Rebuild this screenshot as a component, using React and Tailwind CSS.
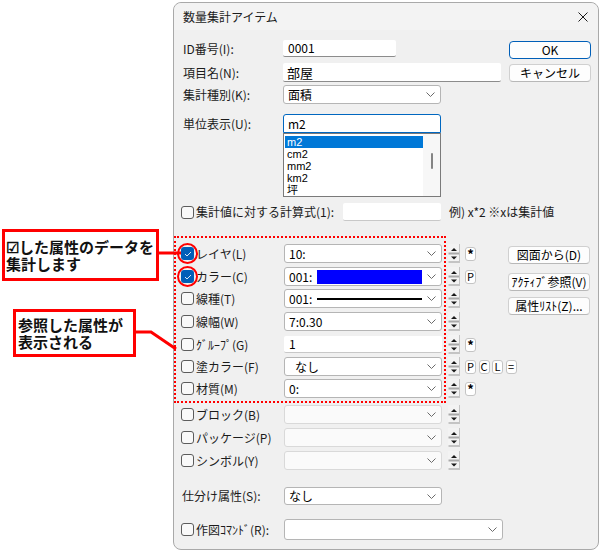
import React from "react";

// 数量集計アイテム ダイアログ + 注釈
const LABEL = "whitespace-nowrap text-[12px] leading-none text-[#1b1b1b]";

function Chevron() {
  return (
    <svg width="9" height="5" viewBox="0 0 9 5" className="shrink-0">
      <path d="M0.5 0.5L4.5 4.5L8.5 0.5" fill="none" stroke="#6b6b6b" strokeWidth="1" />
    </svg>
  );
}

function Combo({ children, size = "h-[19px] w-[158px]", disabled, pad = "pl-[4px]" }) {
  return (
    <div
      className={`flex shrink-0 items-center rounded-[3px] border pr-[5px] ${pad} ${size} ${
        disabled ? "border-[#d9d9d9] bg-[#fafafa]" : "border-[#b5b5b5] bg-white"
      }`}
    >
      <div className="flex min-w-0 flex-1 items-center">{children}</div>
      <Chevron />
    </div>
  );
}

function Spin() {
  return (
    <svg width="12" height="19" viewBox="0 0 12 19" className="ml-[6px] shrink-0">
      <rect x="0" y="0" width="12" height="19" fill="#f3f3f3" />
      <path d="M3 7L6 4L9 7Z" fill="#1a1a1a" />
      <rect x="0.5" y="8.5" width="11" height="2" fill="#a9a9a9" />
      <path d="M3 12.5L6 15.5L9 12.5Z" fill="#1a1a1a" />
      <rect x="0.5" y="17" width="11" height="2" fill="#c4c4c4" />
      <rect x="11" y="0" width="1" height="19" fill="#c4c4c4" />
    </svg>
  );
}

function Tiny({ children, bold }) {
  return (
    <span
      className={`flex h-[14px] w-[11px] items-center justify-center rounded-[3px] border border-[#c4c4c4] bg-white leading-none text-black ${
        bold ? "text-[13px] font-bold" : "text-[11px]"
      }`}
    >
      {children}
    </span>
  );
}

function Btn({ children, primary, className = "" }) {
  return (
    <div
      className={`flex h-[18px] w-[82px] shrink-0 items-center justify-center rounded-[4px] bg-[#fdfdfd] text-[12px] leading-none text-black ${
        primary ? "border-[1.5px] border-[#005fb8]" : "border border-[#d0d0d0] border-b-[#b8b8b8]"
      } ${className}`}
    >
      {children}
    </div>
  );
}

function Check({ checked }) {
  if (checked) {
    return (
      <span className="relative flex h-[13px] w-[13px] shrink-0 items-center justify-center rounded-[3px] bg-[#005fb8]">
        <svg width="8" height="6" viewBox="0 0 8 6">
          <path d="M1 3L3 5L7 1" fill="none" stroke="#d6e6f7" strokeWidth="1" />
        </svg>
        <span className="absolute -inset-[4px] rounded-full border-2 border-[#ff0000]" />
      </span>
    );
  }
  return <span className="h-[13px] w-[13px] shrink-0 rounded-[3px] border border-[#5c5c5c] bg-[#f9f9f9]" />;
}

function AttrRow({ checked, label, children, extra, right, className = "" }) {
  return (
    <div className={`flex h-[19px] items-center pl-[7px] pr-[8px] ${className}`}>
      <div className="flex w-[103px] shrink-0 items-center gap-[2px]">
        <Check checked={checked} />
        <span className={LABEL}>{label}</span>
      </div>
      {children}
      <Spin />
      {extra && <div className="ml-[5px] flex gap-[2.5px]">{extra}</div>}
      {right}
    </div>
  );
}

const UNITS = ["m2", "cm2", "mm2", "km2", "坪"];

export default function App() {
  return (
    <div className="relative flex h-[551px] w-[600px] overflow-hidden bg-white [font-family:'Noto_Sans_CJK_JP','Noto_Sans',sans-serif]">
      {/* 注釈 */}
      <div className="flex w-[173px] shrink-0 flex-col">
        <div className="ml-[2px] mt-[229px] h-[52px] w-[157px] border-[3px] border-[#ff0000] bg-white pl-[1px] pt-[6px] text-[15px] font-bold leading-[17px] text-[#111]">
          <p>☑した属性のデータを</p>
          <p>集計します</p>
        </div>
        <div className="ml-[13px] mt-[28px] h-[48px] w-[123px] border-[3px] border-[#ff0000] bg-white pl-[2px] pt-[4px] text-[15px] font-bold leading-[17px] text-[#111]">
          <p>参照した属性が</p>
          <p>表示される</p>
        </div>
      </div>

      {/* ダイアログ */}
      <div className="mt-[2px] flex h-[548px] w-[426px] shrink-0 flex-col rounded-[8px] border border-[#a9a9a9] bg-[#f0f0f0]">
        <div className="flex h-[27px] shrink-0 items-center justify-between rounded-t-[8px] bg-[#f3f3f3] pl-[9px] pr-[10px]">
          <span className="text-[12px] leading-none text-[#1b1b1b]">数量集計アイテム</span>
          <svg width="10" height="10" viewBox="0 0 10 10">
            <path d="M0.5 0.5L9.5 9.5M9.5 0.5L0.5 9.5" stroke="#1a1a1a" strokeWidth="1" />
          </svg>
        </div>

        <div className="flex flex-col">
          <div className="mt-[10px] flex h-[17px] items-center pl-[9px] pr-[7px]">
            <span className={`w-[100px] ${LABEL}`}>ID番号(I):</span>
            <div className="flex h-[17px] w-[113px] items-center rounded-[2px] border-b border-[#8c8c8c] bg-white pl-[5px] text-[12px] leading-none">
              0001
            </div>
            <Btn primary className="ml-auto mt-[2px]">OK</Btn>
          </div>

          <div className="mt-[6px] flex h-[19px] items-center pl-[9px] pr-[7px]">
            <span className={`w-[100px] ${LABEL}`}>項目名(N):</span>
            <div className="flex h-[19px] w-[218px] items-center rounded-[2px] border-b border-[#8c8c8c] bg-white pl-[4px] text-[13px] leading-none">
              部屋
            </div>
            <Btn className="ml-auto">キャンセル</Btn>
          </div>

          <div className="mt-[3px] flex h-[19px] items-center pl-[9px]">
            <span className={`w-[100px] ${LABEL}`}>集計種別(K):</span>
            <Combo>
              <span className="text-[12px] leading-none">面積</span>
            </Combo>
          </div>

          <div className="mt-[10px] flex h-[19px] items-center pl-[9px]">
            <span className={`w-[100px] ${LABEL}`}>単位表示(U):</span>
            <div className="flex h-[19px] w-[158px] items-center rounded-t-[3px] border border-[#0067c0] bg-white pl-[4px] text-[12px] leading-none">
              m2
            </div>
          </div>

          <div className="ml-[109px] flex h-[64px] w-[158px] border border-[#7a7a7a] bg-white">
            <div className="flex-1 pl-[1px] pt-[2px] [font-family:'Liberation_Sans','Noto_Sans_CJK_JP',sans-serif]">
              {UNITS.map((u, i) => (
                <div
                  key={u}
                  className={`flex h-[12px] items-center pl-[2px] text-[11px] leading-none ${
                    i === 0 ? "bg-[#0078d7] text-white" : "text-black"
                  }`}
                >
                  {u}
                </div>
              ))}
            </div>
            <div className="flex w-[17px] justify-center bg-[#f7f7f7] pt-[19px]">
              <span className="h-[16px] w-[2px] rounded-full bg-[#858585]" />
            </div>
          </div>

          <div className="mt-[6px] flex h-[18px] items-center pl-[7px]">
            <div className="flex w-[162px] items-center gap-[2px]">
              <Check />
              <span className={LABEL}>集計値に対する計算式(1):</span>
            </div>
            <div className="h-[18px] w-[98px] rounded-[2px] border-b border-[#c8c8c8] bg-white" />
            <span className={`ml-[8px] ${LABEL}`}>例) x*2 ※xは集計値</span>
          </div>

          {/* 属性 */}
          <div className="relative mt-[23px] flex flex-col">
            <span className="pointer-events-none absolute -bottom-[5px] -top-[8px] left-0 w-[272px] border-2 border-dotted border-[#ff0000]" />
            <AttrRow
              checked
              label="レイヤ(L)"
              extra={<Tiny bold>*</Tiny>}
              right={<Btn className="ml-auto mt-[2px]">図面から(D)</Btn>}
            >
              <Combo>
                <span className="text-[12px] leading-none">10:</span>
              </Combo>
            </AttrRow>
            <AttrRow
              checked
              label="カラー(C)"
              className="mt-[4px]"
              extra={<Tiny>P</Tiny>}
              right={<Btn className="ml-auto mt-[10px]">ｱｸﾃｨﾌﾞ参照(V)</Btn>}
            >
              <Combo>
                <span className="w-[28px] shrink-0 text-[12px] leading-none">001:</span>
                <span className="h-[14px] w-[105px] bg-[#0000ff]" />
              </Combo>
            </AttrRow>
            <AttrRow
              label="線種(T)"
              className="mt-[3px]"
              right={<Btn className="ml-auto mt-[15px]">属性ﾘｽﾄ(Z)...</Btn>}
            >
              <Combo>
                <span className="w-[28px] shrink-0 text-[12px] leading-none">001:</span>
                <span className="h-[2px] w-[105px] bg-black" />
              </Combo>
            </AttrRow>
            <AttrRow label="線幅(W)" className="mt-[4px]">
              <Combo>
                <span className="text-[12px] leading-none">7:0.30</span>
              </Combo>
            </AttrRow>
            <AttrRow label="ｸﾞﾙｰﾌﾟ(G)" className="mt-[4px]" extra={<Tiny bold>*</Tiny>}>
              <div className="flex h-[17px] w-[158px] shrink-0 items-center rounded-[2px] border-b border-[#c8c8c8] bg-white pl-[5px] text-[12px] leading-none">
                1
              </div>
            </AttrRow>
            <AttrRow
              label="塗カラー(F)"
              className="mt-[3px]"
              extra={
                <>
                  <Tiny>P</Tiny>
                  <Tiny>C</Tiny>
                  <Tiny>L</Tiny>
                  <Tiny>=</Tiny>
                </>
              }
            >
              <Combo pad="pl-[10px]">
                <span className="text-[12px] leading-none">なし</span>
              </Combo>
            </AttrRow>
            <AttrRow label="材質(M)" className="mt-[3px]" extra={<Tiny bold>*</Tiny>}>
              <Combo>
                <span className="text-[12px] leading-none">0:</span>
              </Combo>
            </AttrRow>
          </div>

          <AttrRow label="ブロック(B)" className="mt-[7px]">
            <Combo disabled />
          </AttrRow>
          <AttrRow label="パッケージ(P)" className="mt-[4px]">
            <Combo disabled />
          </AttrRow>
          <AttrRow label="シンボル(Y)" className="mt-[4px]">
            <Combo disabled />
          </AttrRow>

          <div className="mt-[17px] flex h-[18px] items-center pl-[8px]">
            <span className={`w-[102px] ${LABEL}`}>仕分け属性(S):</span>
            <Combo size="h-[18px] w-[158px]">
              <span className="text-[12px] leading-none">なし</span>
            </Combo>
          </div>

          <div className="mt-[14px] flex h-[21px] items-center pl-[7px]">
            <div className="flex w-[103px] items-center gap-[2px]">
              <Check />
              <span className={LABEL}>作図ｺﾏﾝﾄﾞ(R):</span>
            </div>
            <Combo size="h-[21px] w-[219px]" />
          </div>
        </div>
      </div>

      {/* 引き出し線 */}
      <svg className="pointer-events-none absolute left-0 top-0" width="600" height="551" viewBox="0 0 600 551">
        <path d="M158 253H181" fill="none" stroke="#ff0000" strokeWidth="3" />
        <path d="M135 332H151L176 349" fill="none" stroke="#ff0000" strokeWidth="3" />
      </svg>
    </div>
  );
}
